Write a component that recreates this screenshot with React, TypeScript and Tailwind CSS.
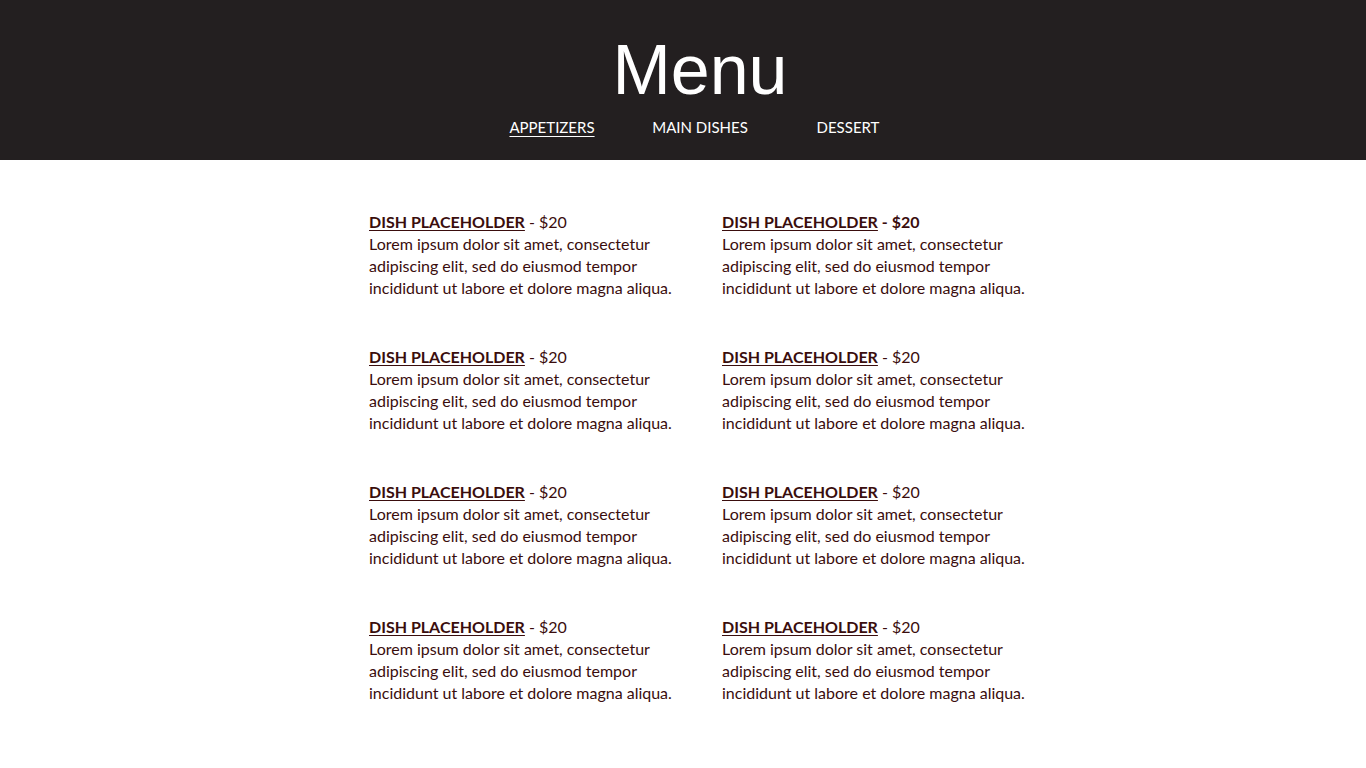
import React from "react";

type Dish = { name: string; price: string; boldPrice?: boolean };

const dishes: Dish[] = [
    { name: "Dish Placeholder", price: "$20" },
    { name: "Dish Placeholder", price: "$20", boldPrice: true },
    { name: "Dish Placeholder", price: "$20" },
    { name: "Dish Placeholder", price: "$20" },
    { name: "Dish Placeholder", price: "$20" },
    { name: "Dish Placeholder", price: "$20" },
    { name: "Dish Placeholder", price: "$20" },
    { name: "Dish Placeholder", price: "$20" },
];

const MenuItem = ({ dish }: { dish: Dish }) => (
    <div className="text-[16px] leading-[22px] text-[#3a0d0d]">
        <p>
            <span className="font-bold uppercase underline underline-offset-2 decoration-1">{dish.name}</span>
            <span className={dish.boldPrice ? "font-bold" : ""}> - {dish.price}</span>
        </p>
        <p>
            Lorem ipsum dolor sit amet, consectetur
            <br />
            adipiscing elit, sed do eiusmod tempor
            <br />
            incididunt ut labore et dolore magna aliqua.
        </p>
    </div>
);

const App = () => {
    return (
        <div className="min-h-screen bg-white font-['Lato',sans-serif]">
            <header className="h-[160px] bg-[#231f20] text-white flex flex-col items-center pl-[34px]">
                <h1 className="mt-[30px] text-[70px] leading-[80px] font-['Liberation_Sans',sans-serif]">Menu</h1>
                <nav className="mt-[7px] flex text-[15px] leading-[20px] uppercase">
                    <a className="w-[148px] text-center underline underline-offset-3 cursor-pointer">Appetizers</a>
                    <a className="w-[148px] text-center cursor-pointer">Main Dishes</a>
                    <a className="w-[148px] text-center cursor-pointer">Dessert</a>
                </nav>
            </header>
            <main className="flex justify-center pt-[51px] pb-12">
                <div className="ml-[32px] w-[660px] grid grid-cols-[353px_1fr] gap-y-[47px]">
                    {dishes.map((d, i) => (
                        <MenuItem key={i} dish={d} />
                    ))}
                </div>
            </main>
        </div>
    );
};

export default App;
